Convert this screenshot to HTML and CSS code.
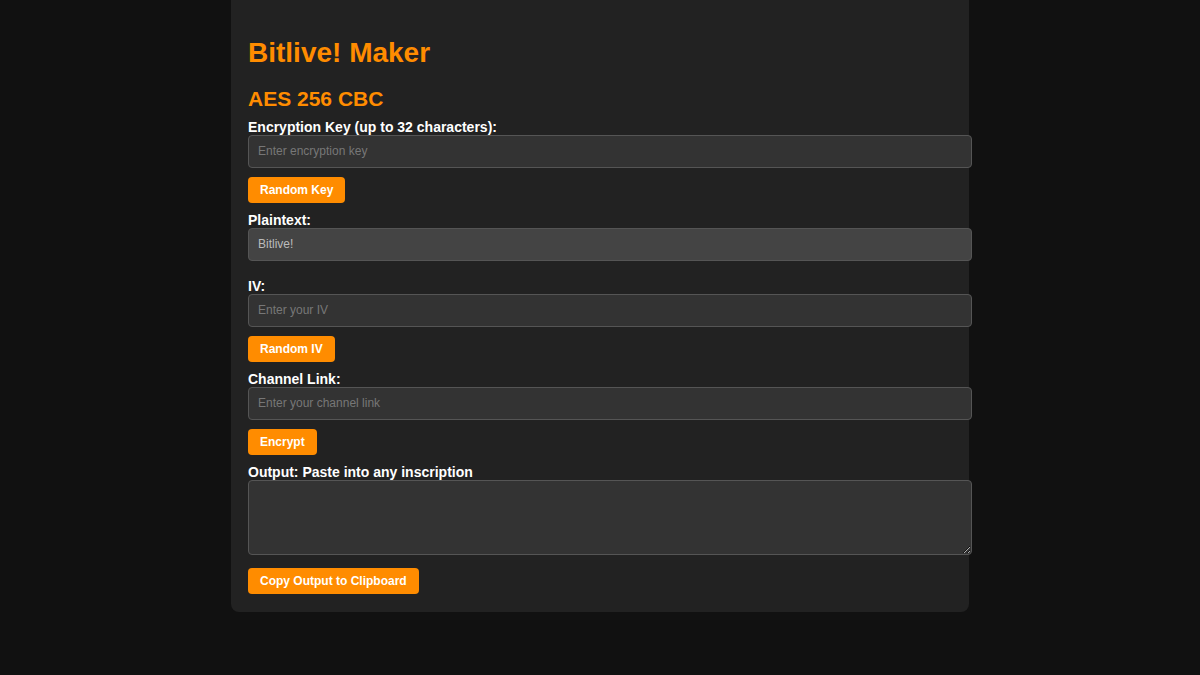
FILE: index.html
```html
<!DOCTYPE html>
<html lang="en">
<head>
    <meta charset="UTF-8">
    <meta name="viewport" content="width=device-width, initial-scale=1.0">
    <title>Bitlive! Maker</title>
    <link rel="stylesheet" href="styles.css">
</head>
<body>

    <div class="container">
        <h1>Bitlive! Maker</h1>
        <h2>AES 256 CBC</h2>

        <div class="field">
            <label for="key">Encryption Key (up to 32 characters):</label>
            <input type="text" id="key" placeholder="Enter encryption key">
        </div>
        <button type="button">Random Key</button>

        <div class="field field-plain">
            <label for="plaintext">Plaintext:</label>
            <input type="text" id="plaintext" class="readonly" value="Bitlive!" readonly>
        </div>

        <div class="field">
            <label for="iv">IV:</label>
            <input type="text" id="iv" placeholder="Enter your IV">
        </div>
        <button type="button">Random IV</button>

        <div class="field">
            <label for="channel">Channel Link:</label>
            <input type="text" id="channel" placeholder="Enter your channel link">
        </div>
        <button type="button">Encrypt</button>

        <div class="field field-output">
            <label for="output">Output: Paste into any inscription</label>
            <textarea id="output"></textarea>
        </div>
        <button type="button" class="last">Copy Output to Clipboard</button>
    </div>

</body>
</html>
```

FILE: styles.css
```css
body {
    background-color: #111;
    color: #fff;
    font-family: "Liberation Sans", Arial, sans-serif;
    margin: 0;
}

.container {
    width: 704px;
    margin: 0 auto;
    padding: 17px 17px 18px;
    background-color: #222;
    border-radius: 0 0 8px 8px;
}

h1 {
    color: #ff8c00;
    font-size: 28px;
    margin: 20px 0 18px;
}

h2 {
    color: #ff8c00;
    font-size: 21px;
    margin: 0 0 8px;
}

label {
    display: block;
    font-size: 14px;
    font-weight: bold;
}

.field {
    margin-bottom: 9px;
}

.field-plain {
    margin-bottom: 17px;
}

.field-output {
    margin-bottom: 13px;
}

input, textarea {
    display: block;
    width: 100%;
    padding: 8px 9px;
    line-height: 15px;
    font-size: 12px;
    font-family: inherit;
    color: #ccc;
    background-color: #333;
    border: 1px solid #555;
    border-radius: 4px;
    margin: 0;
}

input::placeholder {
    color: #777;
}

input.readonly {
    background-color: #444;
    color: #bbb;
}

textarea {
    height: 57px;
}

button {
    display: block;
    background-color: #ff8c00;
    color: #fff;
    font-family: inherit;
    font-size: 12px;
    font-weight: bold;
    line-height: 14px;
    padding: 6px 12px;
    border: none;
    border-radius: 4px;
    margin-bottom: 9px;
    cursor: pointer;
}

button.last {
    margin-bottom: 0;
}
```
